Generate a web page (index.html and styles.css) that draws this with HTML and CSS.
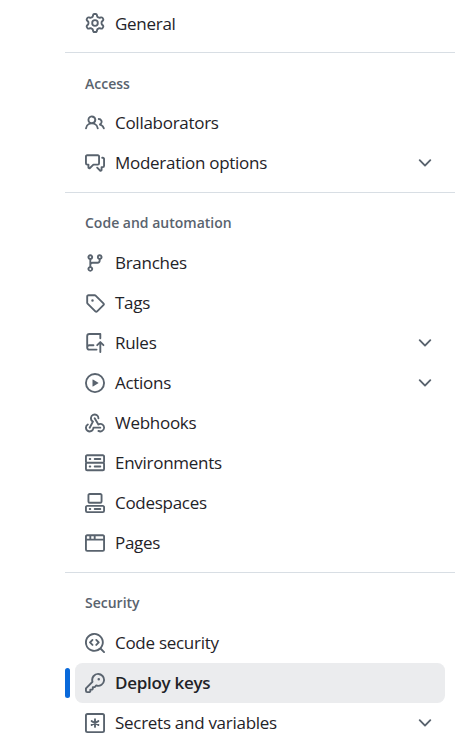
FILE: index.html
```html
<!DOCTYPE html>
<html lang="en">
<head>
<meta charset="utf-8">
<title>Settings</title>
<link rel="stylesheet" href="styles.css">
</head>
<body>
<nav class="sidebar">
  <ul class="group group-first">
    <li class="item">
      <svg class="icon" viewBox="0 0 16 16"><path d="M8 0a8.2 8.2 0 0 1 .701.031C9.444.095 9.99.645 10.16 1.29l.288 1.107c.018.066.079.158.212.224.231.114.454.243.668.386.123.082.233.09.299.071l1.103-.303c.644-.176 1.392.021 1.82.63.27.385.506.792.704 1.218.315.675.111 1.422-.364 1.891l-.814.806c-.049.048-.098.147-.088.294.016.257.016.515 0 .772-.01.147.038.246.088.294l.814.806c.475.469.679 1.216.364 1.891a7.977 7.977 0 0 1-.704 1.217c-.428.61-1.176.807-1.82.63l-1.102-.302c-.067-.019-.177-.011-.3.071a5.909 5.909 0 0 1-.668.386c-.133.066-.194.158-.211.224l-.29 1.106c-.168.646-.715 1.196-1.458 1.26a8.006 8.006 0 0 1-1.402 0c-.743-.064-1.289-.614-1.458-1.26l-.289-1.106c-.018-.066-.079-.158-.212-.224a5.738 5.738 0 0 1-.668-.386c-.123-.082-.233-.09-.299-.071l-1.103.303c-.644.176-1.392-.021-1.82-.63a8.12 8.12 0 0 1-.704-1.218c-.315-.675-.111-1.422.363-1.891l.815-.806c.05-.048.098-.147.088-.294a6.214 6.214 0 0 1 0-.772c.01-.147-.038-.246-.088-.294l-.815-.806C.635 6.045.431 5.298.746 4.623a7.92 7.92 0 0 1 .704-1.217c.428-.61 1.176-.807 1.82-.63l1.102.302c.067.019.177.011.3-.071.214-.143.437-.272.668-.386.133-.066.194-.158.211-.224l.29-1.106C6.009.645 6.556.095 7.299.03 7.53.01 7.764 0 8 0Zm-.571 1.525c-.036.003-.108.036-.137.146l-.289 1.105c-.147.561-.549.967-.998 1.189-.173.086-.34.183-.5.29-.417.278-.97.423-1.529.27l-1.103-.303c-.109-.03-.175.016-.195.045-.22.312-.412.644-.573.99-.014.031-.021.11.059.19l.815.806c.411.406.562.957.53 1.456a4.709 4.709 0 0 0 0 .582c.032.499-.119 1.05-.53 1.456l-.815.806c-.081.08-.073.159-.059.19.162.346.353.677.573.989.02.03.085.076.195.046l1.102-.303c.56-.153 1.113-.008 1.53.27.161.107.328.204.501.29.447.222.85.629.997 1.189l.289 1.105c.029.109.101.143.137.146a6.6 6.6 0 0 0 1.142 0c.036-.003.108-.036.137-.146l.289-1.105c.147-.561.549-.967.998-1.189.173-.086.34-.183.5-.29.417-.278.97-.423 1.529-.27l1.103.303c.109.029.175-.016.195-.045.22-.313.411-.644.573-.99.014-.031.021-.11-.059-.19l-.815-.806c-.411-.406-.562-.957-.53-1.456a4.709 4.709 0 0 0 0-.582c-.032-.499.119-1.05.53-1.456l.815-.806c.081-.08.073-.159.059-.19a6.464 6.464 0 0 0-.573-.989c-.02-.03-.085-.076-.195-.046l-1.102.303c-.56.153-1.113.008-1.53-.27a4.44 4.44 0 0 0-.501-.29c-.447-.222-.85-.629-.997-1.189l-.289-1.105c-.029-.11-.101-.143-.137-.146a6.6 6.6 0 0 0-1.142 0ZM11 8a3 3 0 1 1-6 0 3 3 0 0 1 6 0ZM9.5 8a1.5 1.5 0 1 0-3.001.001A1.5 1.5 0 0 0 9.5 8Z"/></svg>
      <span class="label">General</span>
    </li>
  </ul>

  <h3 class="heading heading-first">Access</h3>
  <ul class="group">
    <li class="item">
      <svg class="icon" viewBox="0 0 16 16"><path d="M2 5.5a3.5 3.5 0 1 1 5.898 2.549 5.508 5.508 0 0 1 3.034 4.084.75.75 0 1 1-1.482.235 4 4 0 0 0-7.9 0 .75.75 0 0 1-1.482-.236A5.507 5.507 0 0 1 3.102 8.05 3.493 3.493 0 0 1 2 5.5ZM11 4a3.001 3.001 0 0 1 2.22 5.018 5.01 5.01 0 0 1 2.56 3.012.749.749 0 0 1-.885.954.752.752 0 0 1-.549-.514 3.507 3.507 0 0 0-2.522-2.372.75.75 0 0 1-.574-.73v-.352a.75.75 0 0 1 .416-.672A1.5 1.5 0 0 0 11 5.5.75.75 0 0 1 11 4Zm-5.5-.5a2 2 0 1 0-.001 3.999A2 2 0 0 0 5.5 3.5Z"/></svg>
      <span class="label">Collaborators</span>
    </li>
    <li class="item">
      <svg class="icon" viewBox="0 0 16 16"><path d="M1.75 1h8.5c.966 0 1.75.784 1.75 1.75v5.5A1.75 1.75 0 0 1 10.25 10H7.061l-2.574 2.573A1.458 1.458 0 0 1 2 11.543V10h-.25A1.75 1.75 0 0 1 0 8.25v-5.5C0 1.784.784 1 1.75 1ZM1.5 2.75v5.5c0 .138.112.25.25.25h1a.75.75 0 0 1 .75.75v2.19l2.72-2.72a.749.749 0 0 1 .53-.22h3.5a.25.25 0 0 0 .25-.25v-5.5a.25.25 0 0 0-.25-.25h-8.5a.25.25 0 0 0-.25.25Zm13 2a.25.25 0 0 0-.25-.25h-.5a.75.75 0 0 1 0-1.5h.5c.966 0 1.75.784 1.75 1.75v5.5A1.75 1.75 0 0 1 14.25 12H14v1.543a1.458 1.458 0 0 1-2.487 1.03L9.22 12.28a.749.749 0 0 1 .326-1.275.749.749 0 0 1 .734.215l2.22 2.22v-2.19a.75.75 0 0 1 .75-.75h1a.25.25 0 0 0 .25-.25Z"/></svg>
      <span class="label">Moderation options</span>
      <svg class="icon" viewBox="0 0 16 16"><path d="M12.78 5.22a.749.749 0 0 1 0 1.06l-4.25 4.25a.749.749 0 0 1-1.06 0L3.22 6.28a.749.749 0 1 1 1.06-1.06L8 8.939l3.72-3.719a.749.749 0 0 1 1.06 0Z"/></svg>
    </li>
  </ul>

  <h3 class="heading">Code and automation</h3>
  <ul class="group">
    <li class="item">
      <svg class="icon" viewBox="0 0 16 16"><path d="M9.5 3.25a2.25 2.25 0 1 1 3 2.122V6A2.5 2.5 0 0 1 10 8.5H6a1 1 0 0 0-1 1v1.128a2.251 2.251 0 1 1-1.5 0V5.372a2.25 2.25 0 1 1 1.5 0v1.836A2.493 2.493 0 0 1 6 7h4a1 1 0 0 0 1-1v-.628A2.25 2.25 0 0 1 9.5 3.25Zm-6 0a.75.75 0 1 0 1.5 0 .75.75 0 0 0-1.5 0Zm8.25-.75a.75.75 0 1 0 0 1.5.75.75 0 0 0 0-1.5ZM4.25 12a.75.75 0 1 0 0 1.5.75.75 0 0 0 0-1.5Z"/></svg>
      <span class="label">Branches</span>
    </li>
    <li class="item">
      <svg class="icon" viewBox="0 0 16 16"><path d="M1 7.775V2.75C1 1.784 1.784 1 2.75 1h5.025c.464 0 .91.184 1.238.513l6.25 6.25a1.75 1.75 0 0 1 0 2.474l-5.026 5.026a1.75 1.75 0 0 1-2.474 0l-6.25-6.25A1.752 1.752 0 0 1 1 7.775Zm1.5 0c0 .066.026.13.073.177l6.25 6.25a.25.25 0 0 0 .354 0l5.025-5.025a.25.25 0 0 0 0-.354l-6.25-6.25a.25.25 0 0 0-.177-.073H2.75a.25.25 0 0 0-.25.25ZM6 5a1 1 0 1 1 0 2 1 1 0 0 1 0-2Z"/></svg>
      <span class="label">Tags</span>
    </li>
    <li class="item">
      <svg class="icon" viewBox="0 0 16 16"><path d="M1 2.5A2.5 2.5 0 0 1 3.5 0h8.75a.75.75 0 0 1 .75.75v3.5a.75.75 0 0 1-1.5 0V1.5h-8a1 1 0 0 0-1 1v6.708A2.493 2.493 0 0 1 3.5 9h3.25a.75.75 0 0 1 0 1.5H3.5a1 1 0 0 0 0 2h5.75a.75.75 0 0 1 0 1.5H3.5A2.5 2.5 0 0 1 1 11.5Zm13.23 7.79h-.001l-1.224-1.224v6.184a.75.75 0 0 1-1.5 0V9.066L10.28 10.29a.75.75 0 0 1-1.06-1.061l2.505-2.504a.75.75 0 0 1 1.06 0L15.29 9.23a.751.751 0 0 1-.018 1.042.751.751 0 0 1-1.042.018Z"/></svg>
      <span class="label">Rules</span>
      <svg class="icon" viewBox="0 0 16 16"><path d="M12.78 5.22a.749.749 0 0 1 0 1.06l-4.25 4.25a.749.749 0 0 1-1.06 0L3.22 6.28a.749.749 0 1 1 1.06-1.06L8 8.939l3.72-3.719a.749.749 0 0 1 1.06 0Z"/></svg>
    </li>
    <li class="item">
      <svg class="icon" viewBox="0 0 16 16"><path d="M8 0a8 8 0 1 1 0 16A8 8 0 0 1 8 0ZM1.5 8a6.5 6.5 0 1 0 13 0 6.5 6.5 0 0 0-13 0Zm4.879-2.773 4.264 2.559a.25.25 0 0 1 0 .428l-4.264 2.559A.25.25 0 0 1 6 10.559V5.442a.25.25 0 0 1 .379-.215Z"/></svg>
      <span class="label">Actions</span>
      <svg class="icon" viewBox="0 0 16 16"><path d="M12.78 5.22a.749.749 0 0 1 0 1.06l-4.25 4.25a.749.749 0 0 1-1.06 0L3.22 6.28a.749.749 0 1 1 1.06-1.06L8 8.939l3.72-3.719a.749.749 0 0 1 1.06 0Z"/></svg>
    </li>
    <li class="item">
      <svg class="icon" viewBox="0 0 16 16"><path d="M5.5 4.25a2.25 2.25 0 0 1 4.5 0 .75.75 0 0 0 1.5 0 3.75 3.75 0 1 0-6.14 2.889l-2.272 4.258a.75.75 0 0 0 1.324.706L7 7.25a.75.75 0 0 0-.309-1.015A2.25 2.25 0 0 1 5.5 4.25Z"/><path d="M7.364 3.607a.75.75 0 0 1 1.03.257l2.608 4.349a3.75 3.75 0 1 1-.628 6.785.75.75 0 0 1 .752-1.299 2.25 2.25 0 1 0-.033-3.88.75.75 0 0 1-1.03-.256L7.107 4.636a.75.75 0 0 1 .257-1.03Z"/><path d="M2.9 8.776A.75.75 0 0 1 2.625 9.8 2.25 2.25 0 1 0 6 11.75a.75.75 0 0 1 .75-.751h5.5a.75.75 0 0 1 0 1.5H7.425a3.751 3.751 0 1 1-5.55-3.998.75.75 0 0 1 1.024.274Z"/></svg>
      <span class="label">Webhooks</span>
    </li>
    <li class="item">
      <svg class="icon" viewBox="0 0 16 16"><path d="M1.75 1h12.5c.966 0 1.75.784 1.75 1.75v4c0 .372-.116.717-.314 1 .198.283.314.628.314 1v4a1.75 1.75 0 0 1-1.75 1.75H1.75A1.75 1.75 0 0 1 0 12.75v-4c0-.358.109-.707.314-1a1.739 1.739 0 0 1-.314-1v-4C0 1.784.784 1 1.75 1ZM1.5 2.75v4c0 .138.112.25.25.25h12.5a.25.25 0 0 0 .25-.25v-4a.25.25 0 0 0-.25-.25H1.75a.25.25 0 0 0-.25.25Zm.25 5.75a.25.25 0 0 0-.25.25v4c0 .138.112.25.25.25h12.5a.25.25 0 0 0 .25-.25v-4a.25.25 0 0 0-.25-.25ZM7 4.75A.75.75 0 0 1 7.75 4h4.5a.75.75 0 0 1 0 1.5h-4.5A.75.75 0 0 1 7 4.75ZM7.75 10h4.5a.75.75 0 0 1 0 1.5h-4.5a.75.75 0 0 1 0-1.5ZM3 4.75A.75.75 0 0 1 3.75 4h.5a.75.75 0 0 1 0 1.5h-.5A.75.75 0 0 1 3 4.75ZM3.75 10h.5a.75.75 0 0 1 0 1.5h-.5a.75.75 0 0 1 0-1.5Z"/></svg>
      <span class="label">Environments</span>
    </li>
    <li class="item">
      <svg class="icon" viewBox="0 0 16 16"><path d="M0 11.25c0-.966.784-1.75 1.75-1.75h12.5c.966 0 1.75.784 1.75 1.75v3A1.75 1.75 0 0 1 14.25 16H1.75A1.75 1.75 0 0 1 0 14.25Zm2-9.5C2 .784 2.784 0 3.75 0h8.5C13.216 0 14 .784 14 1.75v5a1.75 1.75 0 0 1-1.75 1.75h-8.5A1.75 1.75 0 0 1 2 6.75Zm1.75-.25a.25.25 0 0 0-.25.25v5c0 .138.112.25.25.25h8.5a.25.25 0 0 0 .25-.25v-5a.25.25 0 0 0-.25-.25Zm-2 9.5a.25.25 0 0 0-.25.25v3c0 .138.112.25.25.25h12.5a.25.25 0 0 0 .25-.25v-3a.25.25 0 0 0-.25-.25Z"/><path d="M7 12.75a.75.75 0 0 1 .75-.75h4.5a.75.75 0 0 1 0 1.5h-4.5a.75.75 0 0 1-.75-.75Zm-4 0a.75.75 0 0 1 .75-.75h.5a.75.75 0 0 1 0 1.5h-.5a.75.75 0 0 1-.75-.75Z"/></svg>
      <span class="label">Codespaces</span>
    </li>
    <li class="item">
      <svg class="icon" viewBox="0 0 16 16"><path d="M0 2.75C0 1.784.784 1 1.75 1h12.5c.966 0 1.75.784 1.75 1.75v10.5A1.75 1.75 0 0 1 14.25 15H1.75A1.75 1.75 0 0 1 0 13.25ZM14.5 6h-13v7.25c0 .138.112.25.25.25h12.5a.25.25 0 0 0 .25-.25Zm-6-3.5v2h6V2.75a.25.25 0 0 0-.25-.25ZM5 2.5v2h2v-2Zm-3.25 0a.25.25 0 0 0-.25.25V4.5h2v-2Z"/></svg>
      <span class="label">Pages</span>
    </li>
  </ul>

  <h3 class="heading">Security</h3>
  <ul class="group">
    <li class="item">
      <svg class="icon" viewBox="0 0 16 16"><path d="M8.47 4.97a.75.75 0 0 0 0 1.06L9.94 7.5 8.47 8.97a.75.75 0 1 0 1.06 1.06l2-2a.75.75 0 0 0 0-1.06l-2-2a.75.75 0 0 0-1.06 0ZM6.53 6.03a.75.75 0 0 0-1.06-1.06l-2 2a.75.75 0 0 0 0 1.06l2 2a.75.75 0 1 0 1.06-1.06L5.06 7.5l1.47-1.47Z"/><path d="M12.246 13.307a7.501 7.501 0 1 1 1.06-1.06l2.474 2.473a.749.749 0 1 1-1.06 1.06ZM1.5 7.5a6.002 6.002 0 0 0 3.608 5.504 6.002 6.002 0 0 0 6.486-1.117.748.748 0 0 1 .292-.293A6 6 0 1 0 1.5 7.5Z"/></svg>
      <span class="label">Code security</span>
    </li>
    <li class="item item-current">
      <svg class="icon" viewBox="0 0 16 16"><path d="M10.5 0a5.499 5.499 0 1 1-1.288 10.848l-.932.932a.749.749 0 0 1-.53.22H7v.75a.749.749 0 0 1-.22.53l-.5.5a.749.749 0 0 1-.53.22H5v.75a.749.749 0 0 1-.22.53l-.5.5a.749.749 0 0 1-.53.22h-2A1.75 1.75 0 0 1 0 14.25v-2c0-.199.079-.389.22-.53l4.932-4.932A5.5 5.5 0 0 1 10.5 0Zm-4 5.5c-.001.431.069.86.205 1.269a.75.75 0 0 1-.181.768L1.5 12.56v1.69c0 .138.112.25.25.25h1.69l.06-.06v-1.19a.75.75 0 0 1 .75-.75h1.19l.06-.06v-1.19a.75.75 0 0 1 .75-.75h1.19l1.023-1.025a.75.75 0 0 1 .768-.18A4 4 0 1 0 6.5 5.5ZM11 6a1 1 0 1 1 0-2 1 1 0 0 1 0 2Z"/></svg>
      <span class="label">Deploy keys</span>
    </li>
    <li class="item">
      <svg class="icon icon-stroke" viewBox="0 0 16 16"><rect x=".75" y=".75" width="14.5" height="14.5" rx="1.25"/><path d="M8 4.9v6.2M5.3 6.45l5.4 3.1M10.7 6.45l-5.4 3.1"/></svg>
      <span class="label">Secrets and variables</span>
      <svg class="icon" viewBox="0 0 16 16"><path d="M12.78 5.22a.749.749 0 0 1 0 1.06l-4.25 4.25a.749.749 0 0 1-1.06 0L3.22 6.28a.749.749 0 1 1 1.06-1.06L8 8.939l3.72-3.719a.749.749 0 0 1 1.06 0Z"/></svg>
    </li>
  </ul>
</nav>
</body>
</html>
```
FILE: styles.css
```css
* {
  box-sizing: border-box;
}

body {
  margin: 0;
  background: #fff;
  color: #1f2328;
  font-family: "Open Sans", "Noto Sans", sans-serif;
  font-size: 17px;
}

.sidebar {
  width: 390px;
  margin-left: 65px;
  padding-top: 3px;
}

.group {
  list-style: none;
  margin: 0;
  padding: 0 10px;
}

.heading {
  height: 51px;
  margin: 9px 0 0;
  padding: 0 20px;
  border-top: 1px solid #d8dee4;
  color: #59636e;
  font-size: 14px;
  font-weight: 600;
  line-height: 59px;
}

.heading-first {
  line-height: 61px;
}

.item {
  position: relative;
  display: flex;
  align-items: center;
  gap: 10px;
  height: 40px;
  padding: 0 10px;
  border-radius: 7.5px;
}

.item-current {
  background: #ebecee;
  font-weight: 600;
}

.item-current::before {
  content: "";
  position: absolute;
  left: -10px;
  top: 5px;
  width: 5px;
  height: 30px;
  border-radius: 3px;
  background: #0969da;
}

.label {
  flex: 1;
  padding-bottom: 2px;
  line-height: 25px;
  letter-spacing: -0.28px;
  white-space: nowrap;
}

.group-first .label {
  padding-bottom: 0;
}

.icon {
  flex: none;
  width: 20px;
  height: 20px;
  fill: #59636e;
}

.icon-stroke {
  fill: none;
  stroke: #59636e;
  stroke-width: 1.5;
  stroke-linecap: round;
}
```
